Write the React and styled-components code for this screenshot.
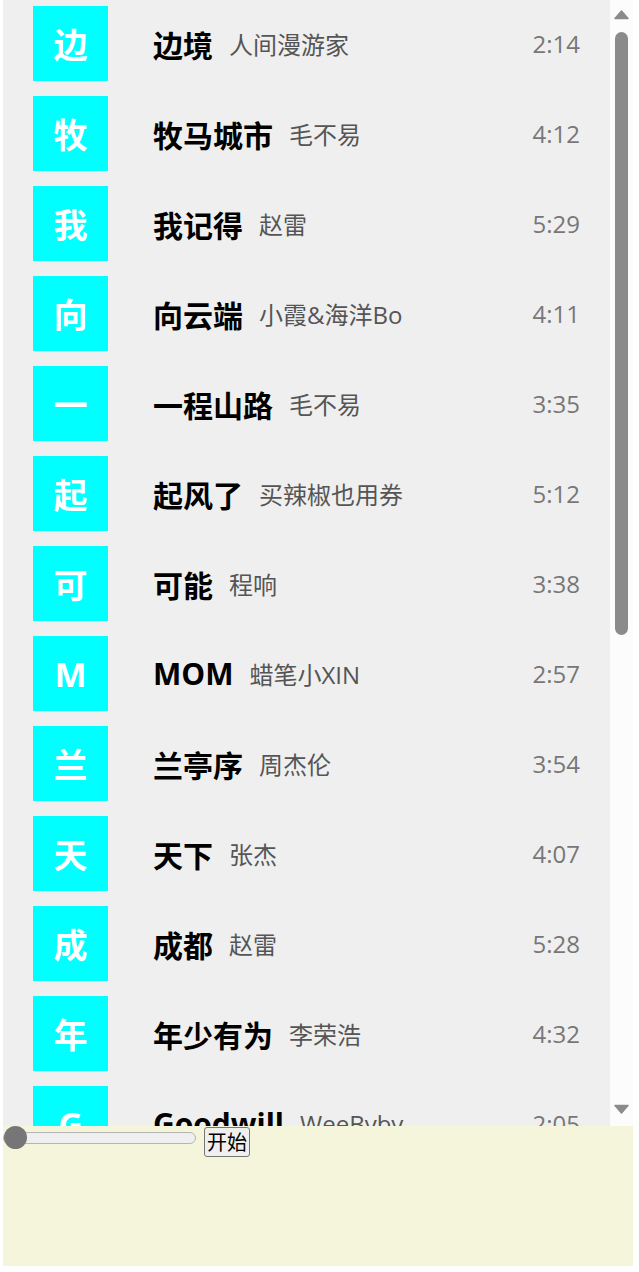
import React from 'react';
import styled, { createGlobalStyle } from 'styled-components';

const GlobalStyle = createGlobalStyle`
  body {
    margin: 0;
    font-family: "Open Sans", "Noto Sans CJK SC", sans-serif;
  }
`;

const songs = [
  { title: '边境', artist: '人间漫游家', time: '2:14' },
  { title: '牧马城市', artist: '毛不易', time: '4:12' },
  { title: '我记得', artist: '赵雷', time: '5:29' },
  { title: '向云端', artist: '小霞&海洋Bo', time: '4:11' },
  { title: '一程山路', artist: '毛不易', time: '3:35' },
  { title: '起风了', artist: '买辣椒也用券', time: '5:12' },
  { title: '可能', artist: '程响', time: '3:38' },
  { title: 'MOM', artist: '蜡笔小XIN', time: '2:57' },
  { title: '兰亭序', artist: '周杰伦', time: '3:54' },
  { title: '天下', artist: '张杰', time: '4:07' },
  { title: '成都', artist: '赵雷', time: '5:28' },
  { title: '年少有为', artist: '李荣浩', time: '4:32' },
  { title: 'Goodwill', artist: 'WeeByby', time: '2:05' },
  { title: '平凡之路', artist: '朴树', time: '4:58' },
  { title: '稻香', artist: '周杰伦', time: '3:43' },
  { title: '晴天', artist: '周杰伦', time: '4:29' },
  { title: '光年之外', artist: '邓紫棋', time: '3:55' },
  { title: '消愁', artist: '毛不易', time: '4:21' },
  { title: '南山南', artist: '马頔', time: '5:24' },
  { title: '理想三旬', artist: '陈鸿宇', time: '3:30' },
  { title: '海阔天空', artist: 'Beyond', time: '5:26' },
  { title: '夜空中最亮的星', artist: '逃跑计划', time: '4:12' },
];

const Page = styled.div`
  width: 630px;
  margin: 0 3px;
  display: flex;
  flex-direction: column;
`;

const ListFrame = styled.div`
  height: 1126px;
  display: flex;
`;

const List = styled.ul`
  flex: 1;
  margin: 0;
  padding: 6px 0 0;
  list-style: none;
  overflow-y: auto;
  scrollbar-width: none;
  background-color: #efefef;
`;

const ScrollTrack = styled.div`
  width: 23px;
  display: flex;
  flex-direction: column;
  align-items: center;
  padding: 10px 0 12px;
  box-sizing: border-box;
  background-color: #fcfcfc;
`;

const ScrollThumb = styled.div`
  width: 13px;
  height: 603px;
  margin: 12px 0 auto;
  border-radius: 7px;
  background-color: #8b8b8b;
`;

const Arrow = ({ down }) => (
  <svg width="15" height="10" viewBox="0 0 15 10">
    <path
      d={ down ? 'M1 1.5 L14 1.5 L7.5 9 Z' : 'M1 8.5 L14 8.5 L7.5 1 Z' }
      fill="#8b8b8b"
      stroke="#8b8b8b"
      strokeWidth="1.5"
      strokeLinejoin="round"
    />
  </svg>
);

const Row = styled.li`
  display: flex;
  align-items: center;
  height: 75px;
  margin-bottom: 15px;
  padding: 0 30px;
`;

const Cover = styled.div`
  width: 75px;
  height: 75px;
  flex-shrink: 0;
  display: flex;
  align-items: center;
  justify-content: center;
  background-color: #00ffff;
  color: white;
  font-size: 34px;
  font-weight: 700;
`;

const Title = styled.span`
  margin-left: 45px;
  font-size: 30px;
  font-weight: 700;
  color: #000;
`;

const Artist = styled.span`
  margin-left: 16px;
  font-size: 24px;
  color: #555;
`;

const Time = styled.span`
  margin-left: auto;
  font-size: 24px;
  color: #777;
`;

const Player = styled.div`
  height: 140px;
  display: flex;
  align-items: flex-start;
  gap: 8px;
  background-color: beige;
`;

const Progress = styled.input`
  -webkit-appearance: none;
  appearance: none;
  width: 193px;
  height: 23px;
  margin: 0;
  background: transparent;

  &::-webkit-slider-runnable-track {
    height: 12px;
    border: 1px solid #b5b5b5;
    border-radius: 7px;
    background: #efefef;
  }

  &::-webkit-slider-thumb {
    -webkit-appearance: none;
    width: 23px;
    height: 23px;
    margin-top: -6.5px;
    border-radius: 50%;
    background: #767676;
  }
`;

const PlayButton = styled.button`
  margin-top: 1px;
  padding: 1px 2px;
  font-family: "Noto Sans CJK SC", sans-serif;
  font-size: 20px;
  line-height: 26px;
  color: #000;
  background: #efefef;
  border: 1px solid #767676;
  border-radius: 3px;
`;

const App = () => (
  <Page>
    <GlobalStyle />
    <ListFrame>
      <List>
        {songs.map((song) => (
          <Row key={ song.title }>
            <Cover>{ song.title[0] }</Cover>
            <Title>{ song.title }</Title>
            <Artist>{ song.artist }</Artist>
            <Time>{ song.time }</Time>
          </Row>
        ))}
      </List>
      <ScrollTrack>
        <Arrow />
        <ScrollThumb />
        <Arrow down />
      </ScrollTrack>
    </ListFrame>
    <Player>
      <Progress type="range" min="0" max="100" defaultValue="0" />
      <PlayButton type="button">开始</PlayButton>
    </Player>
  </Page>
);

export default App;
